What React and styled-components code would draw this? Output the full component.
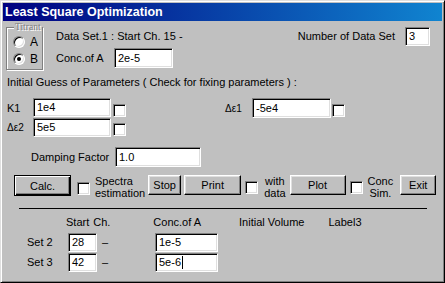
import React from "react";
import styled, { createGlobalStyle, css } from "styled-components";

const GlobalStyle = createGlobalStyle`
  html, body { margin: 0; padding: 0; background: #c0c0c0; }
  body { font-family: "Liberation Sans", Arial, sans-serif; font-size: 11px; color: #000; }
  * { box-sizing: border-box; }
`;

const sunken = css`
  background: #fff;
  border: 1px solid;
  border-color: #808080 #fff #fff #808080;
  box-shadow: inset 1px 1px 0 #000, inset -1px -1px 0 #dfdfdf;
`;

const Window = styled.div`
  width: 445px;
  height: 283px;
  background: #c0c0c0;
  border: 1px solid;
  border-color: #dfdfdf #000 #000 #dfdfdf;
  box-shadow: inset 1px 1px 0 #fff, inset -1px -1px 0 #808080;
  padding: 2px;
  display: flex;
  flex-direction: column;
`;

const TitleBar = styled.div`
  height: 18px;
  flex: none;
  background: linear-gradient(to right, #000080, #1084d0);
  color: #fff;
  font-weight: bold;
  font-size: 12.5px;
  line-height: 18px;
  padding-left: 2px;
`;

const Body = styled.div`
  padding: 0 12px 0 4px;
  display: flex;
  flex-direction: column;
`;

const TopRow = styled.div`
  display: flex;
  align-items: flex-start;
  margin-top: 6px;
`;

const GroupBox = styled.div`
  position: relative;
  width: 37px;
  height: 43px;
  margin-left: -1px;
  border: 1px solid #808080;
  box-shadow: 1px 1px 0 #fff, inset 1px 1px 0 #fff;
  padding: 8px 0 0 6px;
  display: flex;
  flex-direction: column;
  gap: 5px;
`;

const Legend = styled.span`
  position: absolute;
  top: -6px;
  left: 7px;
  padding: 0 1px;
  background: #c0c0c0;
  font-family: "Liberation Serif", serif;
  font-size: 9.5px;
  line-height: 10px;
  color: #808080;
  text-shadow: 1px 1px 0 #fff;
`;

const RadioRow = styled.label`
  display: flex;
  align-items: center;
  height: 12px;
  gap: 5px;
  font-size: 12px;
`;

const Radio = styled.span`
  ${sunken};
  width: 12px;
  height: 12px;
  border-radius: 50%;
  display: flex;
  align-items: center;
  justify-content: center;
  &::after {
    content: "";
    width: 4px;
    height: 4px;
    border-radius: 50%;
    background: ${(p) => (p.$checked ? "#000" : "transparent")};
  }
`;

const DataColumn = styled.div`
  margin-left: 13px;
  display: flex;
  flex-direction: column;
`;

const Text = styled.span`
  line-height: 13px;
  white-space: nowrap;
  margin-top: ${(p) => p.$mt || 0}px;
  margin-left: ${(p) => p.$ml || 0}px;
  width: ${(p) => (p.$w ? `${p.$w}px` : "auto")};
  flex: none;
`;

const Line = styled.div`
  display: flex;
  align-items: center;
  margin-top: ${(p) => p.$mt || 0}px;
  margin-left: ${(p) => p.$ml || 0}px;
`;

const Field = styled.div`
  ${sunken};
  width: ${(p) => p.$w}px;
  height: ${(p) => p.$h || 20}px;
  flex: none;
  display: flex;
  align-items: center;
  padding-left: 3px;
  line-height: 13px;
  white-space: nowrap;
`;

const Caret = styled.span`
  width: 1px;
  height: 13px;
  background: #000;
  margin-left: 1px;
`;

const NumberBox = styled.div`
  margin-left: auto;
  display: flex;
  align-items: center;
  gap: 10px;
`;

const ParamRows = styled.div`
  display: flex;
  align-items: flex-start;
  margin-top: 9px;
`;

const ParamColumn = styled.div`
  display: flex;
  flex-direction: column;
  gap: 1px;
  margin-left: ${(p) => p.$ml || 0}px;
`;

const ParamRow = styled.div`
  display: flex;
  align-items: flex-end;
`;

const ParamLabel = styled.span`
  width: ${(p) => p.$w}px;
  align-self: center;
  font-size: ${(p) => (p.$small ? 10 : 11)}px;
`;

const Check = styled.span`
  ${sunken};
  width: 13px;
  height: 13px;
  flex: none;
  margin-left: ${(p) => p.$ml || 0}px;
  margin-top: ${(p) => p.$mt || 0}px;
  margin-bottom: ${(p) => p.$mb || 0}px;
`;

const ButtonRow = styled.div`
  display: flex;
  align-items: flex-start;
  margin-top: 8px;
  margin-left: 7px;
`;

const Button = styled.button`
  font: inherit;
  color: #000;
  width: ${(p) => p.$w}px;
  height: ${(p) => p.$h || 20}px;
  margin-left: ${(p) => p.$ml || 0}px;
  flex: none;
  padding: 0;
  background: #c0c0c0;
  border: 1px solid;
  border-color: #fff #000 #000 #fff;
  box-shadow: inset -1px -1px 0 #808080, inset 1px 1px 0 #dfdfdf;
  ${(p) =>
    p.$default &&
    css`
      border: 1px solid #000;
      box-shadow: inset 1px 1px 0 #fff, inset -1px -1px 0 #000,
        inset -2px -2px 0 #808080;
    `}
`;

const Caption = styled.span`
  line-height: 12px;
  margin-left: ${(p) => p.$ml || 0}px;
  text-align: ${(p) => p.$align || "left"};
  flex: none;
`;

const Separator = styled.div`
  height: 1px;
  width: 408px;
  background: #000;
  margin: 9px 0 0 12px;
`;

const SetRow = styled.div`
  display: flex;
  align-items: center;
  margin-top: ${(p) => p.$mt || 1}px;
  margin-left: 20px;
`;

export default function App() {
  return (
    <>
      <GlobalStyle />
      <Window>
        <TitleBar>Least Square Optimization</TitleBar>
        <Body>
          <TopRow>
            <GroupBox>
              <Legend>Titrant</Legend>
              <RadioRow>
                <Radio />A
              </RadioRow>
              <RadioRow>
                <Radio $checked />B
              </RadioRow>
            </GroupBox>
            <DataColumn>
              <Text $mt={3}>Data Set.1 : Start Ch. 15 -</Text>
              <Line $mt={5}>
                <Text $w={58}>Conc.of A</Text>
                <Field $w={59}>2e-5</Field>
              </Line>
            </DataColumn>
            <NumberBox>
              <Text>Number of Data Set</Text>
              <Field $w={25} $h={19}>3</Field>
            </NumberBox>
          </TopRow>

          <Text $mt={6}>Initial Guess of Parameters ( Check for fixing parameters ) :</Text>

          <ParamRows>
            <ParamColumn>
              <ParamRow>
                <ParamLabel $w={26}>K1</ParamLabel>
                <Field $w={78} $h={19}>1e4</Field>
                <Check $ml={2} />
              </ParamRow>
              <ParamRow>
                <ParamLabel $w={26} $small>Δε2</ParamLabel>
                <Field $w={78} $h={19}>5e5</Field>
                <Check $ml={2} $mb={1} />
              </ParamRow>
            </ParamColumn>
            <ParamColumn $ml={99}>
              <ParamRow>
                <ParamLabel $w={27} $small>Δε1</ParamLabel>
                <Field $w={79} $h={20}>-5e4</Field>
                <Check $ml={1} $mb={1} />
              </ParamRow>
            </ParamColumn>
          </ParamRows>

          <Line $mt={10} $ml={24}>
            <Text $w={84}>Damping Factor</Text>
            <Field $w={86}>1.0</Field>
          </Line>

          <ButtonRow>
            <Button $w={57} $h={21} $default>Calc.</Button>
            <Check $ml={6} $mt={7} />
            <Caption $ml={5}>
              Spectra
              <br />
              estimation
            </Caption>
            <Button $w={33} $ml={3}>Stop</Button>
            <Button $w={57} $ml={3}>Print</Button>
            <Check $ml={4} $mt={6} />
            <Caption $ml={6} $align="center">
              with
              <br />
              data
            </Caption>
            <Button $w={56} $ml={4}>Plot</Button>
            <Check $ml={4} $mt={6} />
            <Caption $ml={5} $align="center">
              Conc
              <br />
              Sim.
            </Caption>
            <Button $w={36} $ml={7}>Exit</Button>
          </ButtonRow>

          <Separator />

          <Line $mt={7}>
            <Text $ml={59}>Start</Text>
            <Text $ml={4}>Ch.</Text>
            <Text $ml={43}>Conc.of A</Text>
            <Text $ml={38}>Initial Volume</Text>
            <Text $ml={24}>Label3</Text>
          </Line>

          <SetRow $mt={4}>
            <Text $w={41}>Set 2</Text>
            <Field $w={29} $h={19}>28</Field>
            <Text $ml={5} $w={53}>–</Text>
            <Field $w={63} $h={19}>1e-5</Field>
          </SetRow>
          <SetRow>
            <Text $w={41}>Set 3</Text>
            <Field $w={29} $h={19}>42</Field>
            <Text $ml={5} $w={53}>–</Text>
            <Field $w={63} $h={19}>
              5e-6
              <Caret />
            </Field>
          </SetRow>
        </Body>
      </Window>
    </>
  );
}
